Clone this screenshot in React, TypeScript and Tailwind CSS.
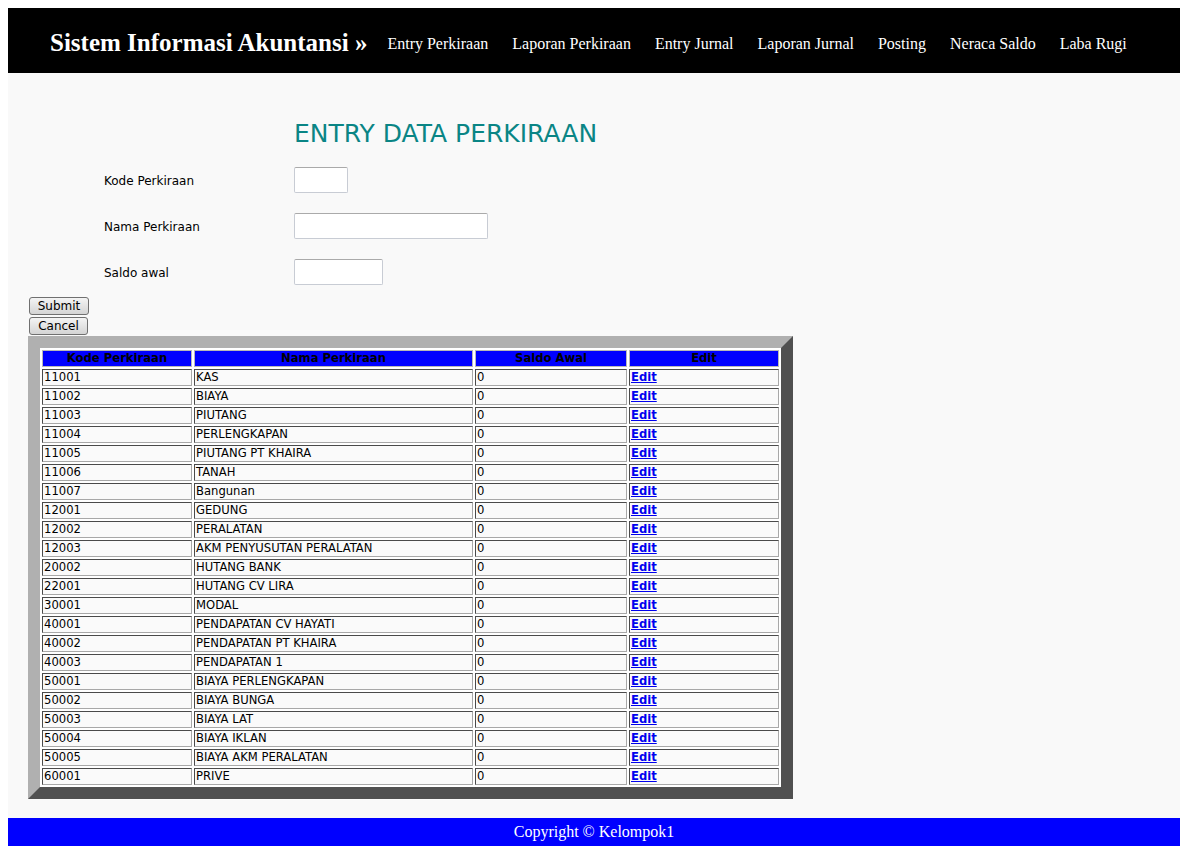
const navItems = [
  "Entry Perkiraan",
  "Laporan Perkiraan",
  "Entry Jurnal",
  "Laporan Jurnal",
  "Posting",
  "Neraca Saldo",
  "Laba Rugi",
];

const rows: [string, string][] = [
  ["11001", "KAS"],
  ["11002", "BIAYA"],
  ["11003", "PIUTANG"],
  ["11004", "PERLENGKAPAN"],
  ["11005", "PIUTANG PT KHAIRA"],
  ["11006", "TANAH"],
  ["11007", "Bangunan"],
  ["12001", "GEDUNG"],
  ["12002", "PERALATAN"],
  ["12003", "AKM PENYUSUTAN PERALATAN"],
  ["20002", "HUTANG BANK"],
  ["22001", "HUTANG CV LIRA"],
  ["30001", "MODAL"],
  ["40001", "PENDAPATAN CV HAYATI"],
  ["40002", "PENDAPATAN PT KHAIRA"],
  ["40003", "PENDAPATAN 1"],
  ["50001", "BIAYA PERLENGKAPAN"],
  ["50002", "BIAYA BUNGA"],
  ["50003", "BIAYA LAT"],
  ["50004", "BIAYA IKLAN"],
  ["50005", "BIAYA AKM PERALATAN"],
  ["60001", "PRIVE"],
];

const td =
  "h-[17px] p-0 pl-[1px] border border-solid border-t-[#4a4a4a] border-l-[#4a4a4a] border-r-[#a8a8a8] border-b-[#a8a8a8] bg-[#fafafa] text-left align-middle leading-[15px] overflow-hidden whitespace-nowrap";
const th =
  "h-[17px] p-0 border border-solid border-[#b8b8b8] bg-[#0000ff] text-black font-bold text-center leading-[15px]";

function Field({ label, width }: { label: string; width: string }) {
  return (
    <>
      <div className="flex items-center pt-[2px] text-[12px] text-black h-[26px]">{label}</div>
      <div>
        <input
          type="text"
          className={`${width} h-[26px] bg-white border border-solid border-[#c8ccd4] border-t-[#aaaaaa] rounded-[2px] outline-none`}
        />
      </div>
    </>
  );
}

export default function App() {
  return (
    <div className="bg-white p-2 min-h-screen font-['DejaVu_Sans',Verdana,sans-serif]">
      <header className="h-[65px] bg-black flex items-center pt-[6px] pl-[42px] font-['Liberation_Serif',serif] text-white">
        <span className="text-[25px] font-bold mr-[8px] -mt-[2px]">Sistem Informasi Akuntansi »</span>
        {navItems.map((n) => (
          <a key={n} className="text-[16px] px-[12px] whitespace-nowrap">
            {n}
          </a>
        ))}
      </header>

      <main className="bg-[#f9f9f9] pl-5 pt-[47px] pb-[19px]">
        <div className="ml-[76px] grid grid-cols-[190px_auto] gap-y-[20px]">
          <div />
          <h1 className="text-[25px] leading-[28px] text-[#0a8585] -mb-[1px]">ENTRY DATA PERKIRAAN</h1>
          <Field label="Kode Perkiraan" width="w-[54px]" />
          <Field label="Nama Perkiraan" width="w-[194px]" />
          <Field label="Saldo awal" width="w-[89px]" />
        </div>

        <div className="mt-[12px] flex flex-col items-start gap-[2px] pl-[1px]">
          <button className="h-[18px] w-[60px] text-[12px] leading-none text-black border border-solid border-[#707070] rounded-[3px] bg-gradient-to-b from-[#f4f4f4] to-[#d4d4d4]">
            Submit
          </button>
          <button className="h-[18px] w-[59px] text-[12px] leading-none text-black border border-solid border-[#707070] rounded-[3px] bg-gradient-to-b from-[#f4f4f4] to-[#d4d4d4]">
            Cancel
          </button>
        </div>

        <table className="mt-[1px] w-[765px] table-fixed border-separate border-spacing-[2px] border-[12px] border-solid border-t-[#b0b0b0] border-l-[#b0b0b0] border-r-[#505050] border-b-[#505050] bg-white text-[11.6px] text-black">
          <colgroup>
            <col className="w-[150px]" />
            <col className="w-[279px]" />
            <col className="w-[152px]" />
            <col className="w-[150px]" />
          </colgroup>
          <thead>
            <tr>
              <th className={th}>Kode Perkiraan</th>
              <th className={th}>Nama Perkiraan</th>
              <th className={th}>Saldo Awal</th>
              <th className={th}>Edit</th>
            </tr>
          </thead>
          <tbody>
            {rows.map(([kode, nama]) => (
              <tr key={kode}>
                <td className={td}>{kode}</td>
                <td className={td}>{nama}</td>
                <td className={td}>0</td>
                <td className={td}>
                  <a href="#" className="font-bold underline text-[#0000ee] text-[11.6px]">
                    Edit
                  </a>
                </td>
              </tr>
            ))}
          </tbody>
        </table>
      </main>

      <footer className="h-[28px] bg-[#0000ff] flex items-center justify-center text-white text-[16px] font-['Liberation_Serif',serif]">
        Copyright © Kelompok1
      </footer>
    </div>
  );
}
